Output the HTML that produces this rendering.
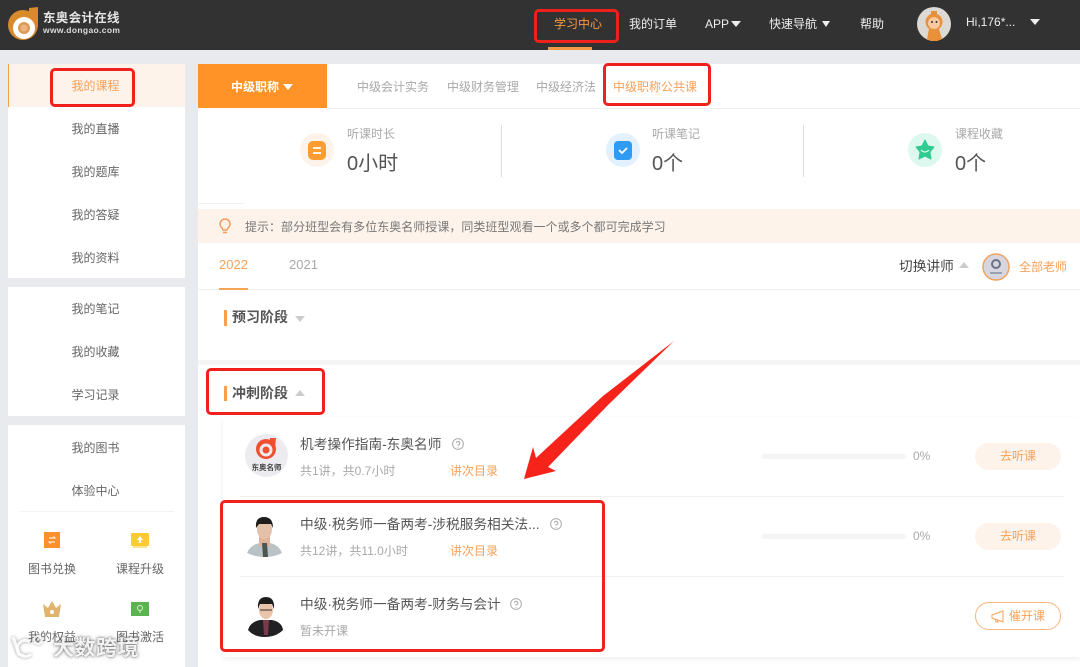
<!DOCTYPE html>
<html lang="zh-CN">
<head>
<meta charset="utf-8">
<title>东奥会计在线</title>
<style>
html,body{margin:0;padding:0;width:1080px;height:667px;overflow:hidden;background:#e8eaee}
body{position:relative;font-family:"Liberation Sans","Noto Sans CJK SC",sans-serif;color:#555}
#w{position:absolute;left:0;top:0;width:1080px;height:667px;overflow:hidden;filter:blur(.35px)}
.b{position:absolute;display:block}
.t{position:absolute;white-space:nowrap;line-height:20px;height:20px}
.c{text-align:center}
.s{font-size:12px}
.m{font-size:13.700px}
.o{color:#f9a057}
.g{color:#a9a9a9}
.red{position:absolute;border:3px solid #f0211c;border-radius:5px;box-sizing:border-box}
.side{left:8px;width:175px;text-align:center;font-size:12px;color:#666}
svg{position:absolute;display:block;overflow:visible}
</style>
</head>
<body>
<div id="w">
<!-- Header -->
<div class="b" style="left:0;top:0;width:1080px;height:50px;background:#323232"></div>
<svg style="left:0;top:0" width="130" height="50">
<path d="M29 14 L29 8 L38 7 L38 26 Z" fill="#d98a2b"/>
<circle cx="23" cy="25" r="15" fill="#d98a2b"/>
<circle cx="24" cy="28" r="11" fill="#fff"/>
<circle cx="24" cy="28" r="6" fill="#dd9a55"/>
<circle cx="24" cy="28" r="3.5" fill="#eeb37d"/>
</svg>
<div class="t" style="left:43px;top:8px;font-size:12.500px;font-weight:bold;color:#e6e6e6;letter-spacing:.3px">东奥会计在线</div>
<div class="t" style="left:43px;top:20px;font-size:8.500px;font-weight:bold;color:#ddd;letter-spacing:.35px">www.dongao.com</div>

<div class="t s" style="left:554px;top:14px;color:#f49a45">学习中心</div>
<div class="b" style="left:548px;top:47px;width:44px;height:3px;background:#f29b45"></div>
<div class="t s" style="left:629px;top:14px;color:#eee">我的订单</div>
<div class="t s" style="left:705px;top:14px;color:#eee">APP</div>
<div class="b" style="left:731px;top:21px;border:5px solid transparent;border-top:6px solid #eee;border-bottom:0"></div>
<div class="t s" style="left:769px;top:14px;color:#eee">快速导航</div>
<div class="b" style="left:822px;top:21px;border:4.5px solid transparent;border-top:6px solid #eee;border-bottom:0"></div>
<div class="t s" style="left:860px;top:14px;color:#eee">帮助</div>
<svg style="left:917px;top:7px" width="34" height="34">
<circle cx="17" cy="17" r="17" fill="#dcd9d4"/>
<path d="M10 32 L12 22 L22 22 L25 32 L20 34 L14 34 Z" fill="#e8913a"/>
<circle cx="17" cy="15" r="8.5" fill="#e8913a"/>
<circle cx="17" cy="16" r="6" fill="#f7c9a0"/>
<rect x="14" y="4" width="6" height="4" fill="#e8913a"/>
<circle cx="15" cy="15" r="1" fill="#333"/><circle cx="19.500" cy="15" r="1" fill="#333"/>
</svg>
<div class="t s" style="left:966px;top:12px;color:#eee">Hi,176*...</div>
<div class="b" style="left:1030px;top:19px;border:5px solid transparent;border-top:6px solid #eee;border-bottom:0"></div>

<!-- Sidebar -->
<div class="b" style="left:8px;top:64px;width:177px;height:214px;background:#fff"></div>
<div class="b" style="left:8px;top:64px;width:177px;height:43px;background:#fdf3ea;border-left:1px solid #f5a04f;box-sizing:border-box"></div>
<div class="b" style="left:8px;top:287px;width:177px;height:129px;background:#fff"></div>
<div class="b" style="left:8px;top:425px;width:177px;height:242px;background:#fff"></div>
<div class="t side" style="top:76px;color:#f9a057">我的课程</div>
<div class="t side" style="top:119px">我的直播</div>
<div class="t side" style="top:162px">我的题库</div>
<div class="t side" style="top:205px">我的答疑</div>
<div class="t side" style="top:248px">我的资料</div>
<div class="t side" style="top:299px">我的笔记</div>
<div class="t side" style="top:342px">我的收藏</div>
<div class="t side" style="top:385px">学习记录</div>
<div class="t side" style="top:438px">我的图书</div>
<div class="t side" style="top:481px">体验中心</div>
<div class="b" style="left:19px;top:511px;width:155px;height:1px;background:#f3f3f3"></div>

<svg style="left:44px;top:532px" width="16" height="17"><rect width="16" height="16" fill="#fb8f2c"/><path d="M5 6 H11 L9.500 4.500 M11 10 H5 L6.500 11.500" fill="none" stroke="#fff" stroke-width="1"/></svg>
<svg style="left:131px;top:533px" width="18" height="16"><rect width="18" height="13" rx="1.500" fill="#fccb33"/><rect x="2" y="13" width="14" height="2" fill="#fde38a"/><path d="M9 3 L12 7 H10.200 V10 H7.800 V7 H6 Z" fill="#fff"/></svg>
<svg style="left:43px;top:601px" width="18" height="17"><path d="M0 3 L5 7 L9 0 L13 7 L18 3 L16 16 H2 Z" fill="#dfb46c"/><circle cx="9" cy="11" r="2" fill="#fff"/></svg>
<svg style="left:131px;top:602px" width="18" height="15"><rect width="18" height="14" fill="#5cb450"/><circle cx="9" cy="6" r="2.500" fill="none" stroke="#d8efcf" stroke-width="1"/><path d="M8 10 H10" stroke="#d8efcf"/></svg>
<div class="t s c" style="left:22px;top:559px;width:60px;color:#666">图书兑换</div>
<div class="t s c" style="left:110px;top:559px;width:60px;color:#666">课程升级</div>
<div class="t s c" style="left:22px;top:627px;width:60px;color:#666">我的权益</div>
<div class="t s c" style="left:110px;top:627px;width:60px;color:#666">图书激活</div>

<!-- Main -->
<div class="b" style="left:198px;top:64px;width:882px;height:603px;background:#fff"></div>
<div class="b" style="left:198px;top:64px;width:129px;height:44px;background:#ff9327"></div>
<div class="b" style="left:327px;top:108px;width:753px;height:1px;background:#eee"></div>
<div class="t s" style="left:231px;top:77px;color:#fff;font-weight:bold">中级职称</div>
<div class="b" style="left:283px;top:84px;border:5px solid transparent;border-top:6px solid #fff;border-bottom:0"></div>
<div class="t s g" style="left:357px;top:77px">中级会计实务</div>
<div class="t s g" style="left:447px;top:77px">中级财务管理</div>
<div class="t s g" style="left:536px;top:77px">中级经济法</div>
<div class="t s o" style="left:613px;top:77px">中级职称公共课</div>

<!-- Stats -->
<div class="b" style="left:501px;top:125px;width:1px;height:52px;background:#ddd"></div>
<div class="b" style="left:803px;top:125px;width:1px;height:52px;background:#ddd"></div>
<div class="b" style="left:198px;top:203px;width:46px;height:1px;background:#f0f0f0"></div>
<svg style="left:300px;top:133px" width="34" height="34"><circle cx="17" cy="17" r="17" fill="#fdf3ea"/><rect x="8" y="8" width="18" height="19" rx="5" fill="#fd9c2f"/><path d="M13 15 H21 M13 20 H21" stroke="#fff" stroke-width="1.800"/></svg>
<svg style="left:606px;top:133px" width="34" height="34"><circle cx="17" cy="17" r="17" fill="#e2f1fd"/><rect x="8" y="8" width="18" height="19" rx="4" fill="#2f9bf2"/><path d="M13 17 L16 20 L21 15" fill="none" stroke="#fff" stroke-width="1.800"/></svg>
<svg style="left:908px;top:133px" width="34" height="34"><circle cx="17" cy="17" r="17" fill="#dcf8ef"/><path d="M17 7 L20 13 L26 14 L22 19 L23 26 L17 23 L11 26 L12 19 L8 14 L14 13 Z" fill="#2fcb92" stroke="#2fcb92" stroke-linejoin="round"/><path d="M13 17 Q17 21 21 17" fill="none" stroke="#dcf8ef" stroke-width="1.200"/></svg>
<div class="t s g" style="left:347px;top:124px">听课时长</div>
<div class="t s g" style="left:652px;top:124px">听课笔记</div>
<div class="t s g" style="left:955px;top:124px">课程收藏</div>
<div class="t" style="left:347px;top:153px;font-size:20px;height:22px;line-height:22px;color:#555">0小时</div>
<div class="t" style="left:652px;top:153px;font-size:20px;height:22px;line-height:22px;color:#555">0个</div>
<div class="t" style="left:955px;top:153px;font-size:20px;height:22px;line-height:22px;color:#555">0个</div>

<!-- Tip -->
<div class="b" style="left:198px;top:209px;width:882px;height:34px;background:#fdf3ea"></div>
<svg style="left:219px;top:219px" width="12" height="15"><path d="M3 9 A5 5 0 1 1 9 9 L8 11 H4 Z M4 13.500 H8" fill="none" stroke="#f59a5a" stroke-width="1.400"/></svg>
<div class="t s" style="left:245px;top:217px;color:#777;letter-spacing:.02px">提示：部分班型会有多位东奥名师授课，同类班型观看一个或多个都可完成学习</div>

<!-- Years -->
<div class="t" style="left:219px;top:255px;font-size:13px;color:#f9a057">2022</div>
<div class="t g" style="left:289px;top:255px;font-size:13px">2021</div>
<div class="b" style="left:198px;top:289px;width:882px;height:1px;background:#eee"></div>
<div class="b" style="left:219px;top:288px;width:29px;height:2px;background:#f5a45a"></div>
<div class="t m" style="left:899px;top:257px;color:#444">切换讲师</div>
<div class="b" style="left:959px;top:262px;border:5px solid transparent;border-bottom:6px solid #ccc;border-top:0"></div>
<svg style="left:982px;top:253px" width="28" height="28"><circle cx="14" cy="14" r="13" fill="#d7d7e2" stroke="#f0a45f" stroke-width="1.500"/><circle cx="14" cy="11" r="4" fill="none" stroke="#6c7287" stroke-width="2"/><rect x="8" y="19" width="12" height="2" fill="#9ba0b0"/></svg>
<div class="t s o" style="left:1019px;top:257px">全部老师</div>

<!-- Sections -->
<div class="b" style="left:224px;top:310px;width:3px;height:16px;background:#f5a04f"></div>
<div class="t" style="left:232px;top:307px;font-size:14px;font-weight:bold;color:#555">预习阶段</div>
<div class="b" style="left:295px;top:316px;border:5px solid transparent;border-top:6px solid #ccc;border-bottom:0"></div>
<div class="b" style="left:198px;top:360px;width:882px;height:5px;background:#f5f5f5"></div>
<div class="b" style="left:224px;top:386px;width:3px;height:15px;background:#f5a04f"></div>
<div class="t" style="left:232px;top:383px;font-size:14px;font-weight:bold;color:#555">冲刺阶段</div>
<div class="b" style="left:295px;top:390px;border:5px solid transparent;border-bottom:6px solid #ccc;border-top:0"></div>

<!-- Course list -->
<div class="b" style="left:223px;top:417px;width:857px;height:240px;background:#fff;box-shadow:0 2px 5px rgba(0,0,0,.07)"></div>
<div class="b" style="left:240px;top:496px;width:824px;height:1px;background:#f1f1f1"></div>
<div class="b" style="left:240px;top:576px;width:824px;height:1px;background:#f1f1f1"></div>

<svg style="left:245px;top:434px" width="43" height="43"><circle cx="21.500" cy="21.500" r="21.500" fill="#ecebef"/><circle cx="21" cy="15" r="10" fill="#f04f30"/><path d="M25 7 L25 4 L31 4 L30 14 Z" fill="#f04f30"/><circle cx="21" cy="16" r="6.500" fill="#ecebef"/><circle cx="21" cy="16" r="3.500" fill="#f04f30"/></svg>
<div class="t" style="left:245px;top:458px;width:43px;text-align:center;font-size:7.500px;font-weight:bold;color:#444">东奥名师</div>

<svg style="left:246px;top:516px" width="38" height="42"><path d="M1 37 Q4 29 14 27 H24 Q33 29 36 37 Q28 41 19 41 Q9 41 1 37 Z" fill="#b9c3c6"/><rect x="13" y="19" width="11" height="11" fill="#dcb59c"/><path d="M16 27 L21 27 L22 41 L17 41 Z" fill="#4d5550"/><ellipse cx="18.500" cy="13" rx="7.500" ry="10" fill="#e4c0a8"/><path d="M10 12 Q9 1 18 1 Q27 1 27 12 L25 8 H13 Z" fill="#1f1c1c"/></svg>
<svg style="left:248px;top:597px" width="36" height="40"><path d="M0 33 Q2 25 12 23 H24 Q34 25 35 33 Q28 40 17 40 Q6 40 0 33 Z" fill="#212022"/><path d="M15 23 H21 L20 38 H16 Z" fill="#7a3a4c"/><ellipse cx="18" cy="13" rx="7" ry="9" fill="#eac3a8"/><path d="M10 12 Q9 0 18 0 Q27 0 26 12 L24 7 H12 Z" fill="#1d1b1b"/><path d="M12 13 H24" stroke="#333" stroke-width="1"/></svg>

<div class="t m" style="left:300px;top:435px;color:#555">机考操作指南-东奥名师</div>
<svg style="left:452px;top:438px" width="12" height="12"><circle cx="6" cy="6" r="5.400" fill="none" stroke="#aaa"/><path d="M4.300 4.800 A1.800 1.800 0 1 1 6 7 V7.800 M6 9 V9.800" fill="none" stroke="#aaa"/></svg>
<div class="t s g" style="left:300px;top:461px">共1讲，共0.7小时</div>
<div class="t s o" style="left:450px;top:461px">讲次目录</div>
<div class="b" style="left:762px;top:454px;width:144px;height:5px;border-radius:3px;background:#f4f4f4"></div>
<div class="t s g" style="left:913px;top:446px">0%</div>
<div class="t s c o" style="left:975px;top:443px;width:86px;height:27px;line-height:27px;background:#fdf3ea;border-radius:14px">去听课</div>

<div class="t m" style="left:300px;top:515px;color:#555">中级·税务师一备两考-涉税服务相关法...</div>
<svg style="left:550px;top:518px" width="12" height="12"><circle cx="6" cy="6" r="5.400" fill="none" stroke="#aaa"/><path d="M4.300 4.800 A1.800 1.800 0 1 1 6 7 V7.800 M6 9 V9.800" fill="none" stroke="#aaa"/></svg>
<div class="t s g" style="left:300px;top:541px">共12讲，共11.0小时</div>
<div class="t s o" style="left:450px;top:541px">讲次目录</div>
<div class="b" style="left:762px;top:534px;width:144px;height:5px;border-radius:3px;background:#f4f4f4"></div>
<div class="t s g" style="left:913px;top:526px">0%</div>
<div class="t s c o" style="left:975px;top:523px;width:86px;height:27px;line-height:27px;background:#fdf3ea;border-radius:14px">去听课</div>

<div class="t m" style="left:300px;top:595px;color:#555">中级·税务师一备两考-财务与会计</div>
<svg style="left:510px;top:598px" width="12" height="12"><circle cx="6" cy="6" r="5.400" fill="none" stroke="#aaa"/><path d="M4.300 4.800 A1.800 1.800 0 1 1 6 7 V7.800 M6 9 V9.800" fill="none" stroke="#aaa"/></svg>
<div class="t s g" style="left:300px;top:621px">暂未开课</div>
<div class="b" style="left:975px;top:602px;width:86px;height:28px;box-sizing:border-box;border:1px solid #f9b67d;border-radius:14px"></div>
<svg style="left:991px;top:610px" width="13" height="13"><path d="M1 5 L12 1 V12 L1 8 Z M4 9 L5 12 H7 L6.500 10" fill="none" stroke="#f9a057" stroke-width="1"/></svg>
<div class="t s o" style="left:1009px;top:606px">催开课</div>

<!-- Annotations -->
<div class="red" style="left:50px;top:68px;width:85px;height:39px"></div>
<div class="red" style="left:534px;top:9px;width:85px;height:34px"></div>
<div class="red" style="left:603px;top:63px;width:108px;height:43px"></div>
<div class="red" style="left:206px;top:368px;width:119px;height:47px"></div>
<div class="red" style="left:220px;top:500px;width:385px;height:152px"></div>
<svg style="left:0;top:0" width="1080" height="667"><polygon points="524,479 533,447 536,458 603,396 674,341 608,405 548,467 556,471" fill="#f5231a"/></svg>

<!-- Watermark -->
<svg style="left:10px;top:634px;filter:drop-shadow(0 0 1.500px rgba(70,70,70,.6))" width="36" height="26"><path d="M3 3 L9 20 L14 22" fill="none" stroke="#fff" stroke-width="3.500" opacity=".9"/><path d="M20 8 A8 8 0 1 0 21 20" fill="none" stroke="#fff" stroke-width="3" opacity=".9"/><circle cx="28" cy="6" r="4" fill="none" stroke="#fff" stroke-width="2" opacity=".85"/></svg>
<div class="t" style="left:53px;top:636px;height:26px;line-height:26px;font-size:21px;font-weight:bold;color:rgba(255,255,255,.9);text-shadow:0 0 2px rgba(70,70,70,.8),0 0 4px rgba(90,90,90,.5);letter-spacing:.5px">大数跨境</div>
</div>
</body>
</html>
